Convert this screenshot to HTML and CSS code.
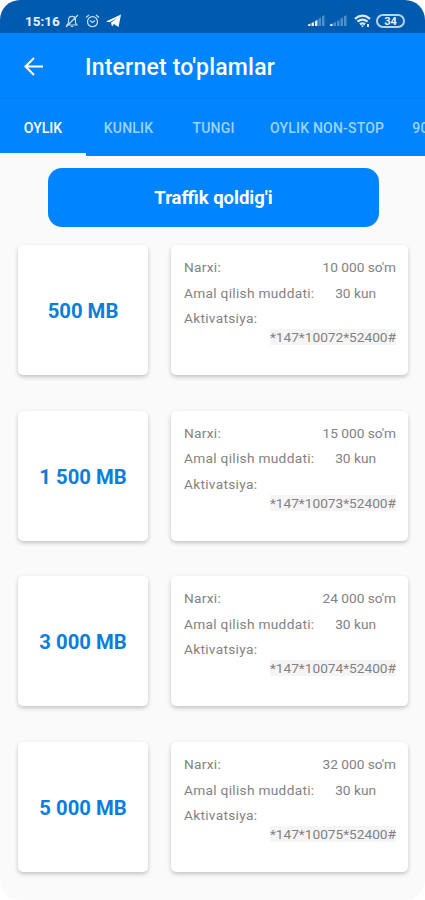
FILE: index.html
```html
<!DOCTYPE html>
<html lang="uz">
<head>
    <meta charset="UTF-8">
    <meta name="viewport" content="width=device-width, initial-scale=1.0">
    <title>Internet to'plamlar</title>
    <link rel="stylesheet" href="styles.css">
</head>
<body>
    <div class="phone">
        <!-- Status Bar -->
        <div class="status-bar">
            <span class="time">15:16</span>
            <svg class="bell" width="14" height="14" viewBox="0 0 14 14" fill="none" stroke="#c3dcf2" stroke-width="1.2">
                <path d="M2 11h10l-1.5-2V6c0-2.200-1.200-3.700-3.500-3.700S3.500 3.800 3.500 6v3zM5.800 12.500h2.400M1 13L13 1"/>
            </svg>
            <svg class="alarm" width="15" height="14" viewBox="0 0 15 14" fill="none" stroke="#c3dcf2" stroke-width="1.3">
                <circle cx="7.500" cy="7.700" r="5"/>
                <path d="M1 3.500L4 1M14 3.500L11 1M5 6.500l2.500 2L10 6.500"/>
            </svg>
            <svg class="telegram" width="15" height="14" viewBox="0 0 15 14" fill="#fff">
                <path d="M0 7.500L15 0.500L12.500 13L8 10L6 12.500L5 8.800L11.500 3.500L3.800 8.300z"/>
            </svg>
            <span class="spacer"></span>
            <svg class="signal" width="17" height="12" viewBox="0 0 17 12" fill="#e0eefb">
                <path d="M0 11V9.500L2.500 8.500V11zM3.500 11V8L6 7V11zM7 11V6L9.500 5V11z"/>
                <path opacity=".35" d="M10.500 11V3.500L13 2.500V11zM14 11V1.500L16.500 0V11z"/>
            </svg>
            <svg class="signal" width="17" height="12" viewBox="0 0 17 12" fill="#e0eefb">
                <path d="M0 11V9.500L2.500 8.500V11z"/>
                <path opacity=".35" d="M3.500 11V8L6 7V11zM7 11V6L9.500 5V11zM10.500 11V3.500L13 2.500V11zM14 11V1.500L16.500 0V11z"/>
            </svg>
            <svg class="wifi" width="18" height="14" viewBox="0 0 18 14" fill="none" stroke="#d8eafa" stroke-width="2.200">
                <path d="M1 4.800Q8.500-1.500 16 4.800M3.500 7.700Q8.500 3.500 13.500 7.700M6 10.400Q8.500 8.200 11 10.400"/>
                <path stroke="none" fill="#d8eafa" d="M7 11.500h3L8.500 13.500zM13 10h2v3h-2z"/>
            </svg>
            <span class="battery"><span>34</span></span>
        </div>

        <!-- App Bar -->
        <div class="app-bar">
            <svg width="20" height="20" viewBox="0 0 20 20" fill="none" stroke="#fff" stroke-width="2">
                <path d="M19 9.500H2M10 1L1.500 9.500l8.500 8.500"/>
            </svg>
            <h1>Internet to'plamlar</h1>
        </div>

        <!-- Tabs -->
        <div class="tabs">
            <div class="tab active">OYLIK</div>
            <div class="tab">KUNLIK</div>
            <div class="tab">TUNGI</div>
            <div class="tab">OYLIK NON-STOP</div>
            <div class="tab">90</div>
        </div>

        <!-- Main Content -->
        <div class="content">
            <button class="traffic">Traffik qoldig'i</button>

            <div class="packages">
                <div class="package">
                    <div class="card amount">500 MB</div>
                    <div class="card details">
                        <p class="row"><span class="label">Narxi:</span><span>10 000 so'm</span></p>
                        <p class="row term"><span class="label">Amal qilish muddati:</span><span>30 kun</span></p>
                        <p class="row"><span class="label">Aktivatsiya:</span></p>
                        <p class="code"><span>*147*10072*52400#</span></p>
                    </div>
                </div>
                <div class="package">
                    <div class="card amount">1 500 MB</div>
                    <div class="card details">
                        <p class="row"><span class="label">Narxi:</span><span>15 000 so'm</span></p>
                        <p class="row term"><span class="label">Amal qilish muddati:</span><span>30 kun</span></p>
                        <p class="row"><span class="label">Aktivatsiya:</span></p>
                        <p class="code"><span>*147*10073*52400#</span></p>
                    </div>
                </div>
                <div class="package">
                    <div class="card amount">3 000 MB</div>
                    <div class="card details">
                        <p class="row"><span class="label">Narxi:</span><span>24 000 so'm</span></p>
                        <p class="row term"><span class="label">Amal qilish muddati:</span><span>30 kun</span></p>
                        <p class="row"><span class="label">Aktivatsiya:</span></p>
                        <p class="code"><span>*147*10074*52400#</span></p>
                    </div>
                </div>
                <div class="package">
                    <div class="card amount">5 000 MB</div>
                    <div class="card details">
                        <p class="row"><span class="label">Narxi:</span><span>32 000 so'm</span></p>
                        <p class="row term"><span class="label">Amal qilish muddati:</span><span>30 kun</span></p>
                        <p class="row"><span class="label">Aktivatsiya:</span></p>
                        <p class="code"><span>*147*10075*52400#</span></p>
                    </div>
                </div>
            </div>
        </div>
    </div>
</body>
</html>
```
FILE: styles.css
```css
/* General Body Styling */
* {
    box-sizing: border-box;
}

body {
    font-family: Roboto, sans-serif;
    margin: 0;
    background: #fff;
    overflow: hidden;
}

.phone {
    width: 425px;
    height: 900px;
    background: #fafafa;
    border-radius: 20px;
    overflow: hidden;
}

/* Status Bar */
.status-bar {
    display: flex;
    align-items: center;
    height: 33px;
    padding: 9px 20px 0 25px;
    background: #005baf;
    color: #e6f2fd;
}

.time {
    width: 34px;
    font-size: 13.5px;
    font-weight: 700;
}

.bell {
    margin-left: 6px;
}

.alarm {
    margin-left: 6px;
}

.telegram {
    margin-left: 6px;
}

.spacer {
    flex: 1;
}

.signal {
    margin-right: 5px;
}

.wifi {
    margin: 0 4px 0 2px;
}

.battery {
    display: flex;
    align-items: center;
    justify-content: center;
    width: 29px;
    height: 14px;
    border: 2px solid #b5d5ef;
    border-radius: 7px;
    font-size: 11px;
    font-weight: 700;
}

/* App Bar */
.app-bar {
    display: flex;
    align-items: center;
    height: 65px;
    padding: 2px 24px 0;
    background: #0084ff;
}

.app-bar h1 {
    margin: 2px 0 0 41px;
    font-size: 23px;
    font-weight: 500;
    letter-spacing: 0.2px;
    color: #fff;
}

/* Tabs */
.tabs {
    display: flex;
    height: 58px;
    background: #0084ff;
    border-top: 1px solid #007df2;
    overflow: hidden;
}

.tab {
    flex: none;
    display: flex;
    align-items: center;
    justify-content: center;
    min-width: 85px;
    padding: 3px 14px 0;
    border-bottom: 3px solid transparent;
    font-size: 14px;
    font-weight: 500;
    letter-spacing: 0.2px;
    color: #9cd3ff;
}

.tab.active {
    min-width: 86px;
    letter-spacing: 0;
    color: #fff;
    border-bottom-color: #fafafa;
}

.tab:last-child {
    justify-content: flex-start;
}

/* Main Content */
.content {
    padding: 12px 17px 0 18px;
}

.traffic {
    display: block;
    width: 331px;
    height: 59px;
    margin: 0 0 18px 30px;
    border: none;
    border-radius: 14px;
    background: #0084ff;
    color: #fff;
    font-family: inherit;
    font-size: 18.5px;
    font-weight: 700;
}

.packages {
    display: flex;
    flex-direction: column;
    gap: 35.7px;
}

.package {
    display: grid;
    grid-template-columns: 130px 237px;
    gap: 23px;
    height: 130px;
}

.card {
    background: #fff;
    border-radius: 5px;
    box-shadow: 0 2px 4px rgba(0, 0, 0, 0.22);
}

.amount {
    display: flex;
    align-items: center;
    justify-content: center;
    padding-top: 2px;
    font-size: 20.3px;
    font-weight: 700;
    color: #0b7ddb;
}

/* Package Details */
.details {
    padding: 10px 12px 0 13px;
    font-size: 13.7px;
    color: #828282;
}

.details p {
    margin: 0;
}

.row {
    display: flex;
    justify-content: space-between;
    height: 25.5px;
    line-height: 25.5px;
}

.label {
    letter-spacing: 0.3px;
}

.row.term {
    padding-right: 20px;
}

.details .code {
    margin-top: -2.5px;
    line-height: 16px;
    text-align: right;
}

.code span {
    background: #f6f5f6;
}
```
